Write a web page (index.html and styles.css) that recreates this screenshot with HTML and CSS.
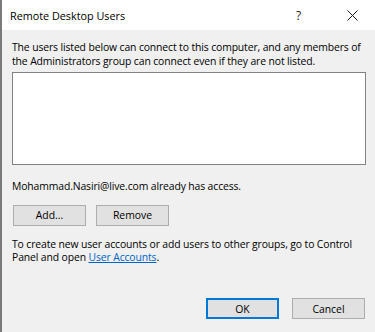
FILE: index.html
```html
<!DOCTYPE html>
<html lang="en">
<head>
  <meta charset="UTF-8">
  <title>Remote Desktop Users</title>
  <link rel="stylesheet" href="styles.css">
</head>
<body>
  <div class="janela">
    <div class="barra-titulo">
      <span class="titulo">Remote Desktop Users</span>
      <span class="ajuda">?</span>
      <span class="fechar">
        <svg width="11" height="11" viewBox="0 0 11 11">
          <path d="M0.5 0.5 L10.5 10.5 M10.5 0.5 L0.5 10.5" stroke="#1a1a1a" stroke-width="1" fill="none"/>
        </svg>
      </span>
    </div>

    <div class="conteudo">
      <p class="texto">The users listed below can connect to this computer, and any members of the Administrators group can connect even if they are not listed.</p>
      <div class="lista"></div>
      <p class="texto acesso">Mohammad.Nasiri@live.com already has access.</p>
      <div class="botoes">
        <button class="botao">Add...</button>
        <button class="botao">Remove</button>
      </div>
      <p class="texto rodape-texto">To create new user accounts or add users to other groups, go to Control Panel and open <a href="#">User Accounts</a>.</p>
    </div>

    <div class="acoes">
      <button class="botao padrao">OK</button>
      <button class="botao">Cancel</button>
    </div>
  </div>
</body>
</html>
```

FILE: styles.css
```css
body {
  margin: 0;
  font-family: "Open Sans", "Noto Sans", sans-serif;
  font-size: 10.4px;
  color: #000;
}
.janela {
  width: 375px;
  height: 332px;
  box-sizing: border-box;
  border-left: 2px solid #7a7a7a;
  background-color: #f0f0f0;
  display: flex;
  flex-direction: column;
}
.barra-titulo {
  height: 30px;
  background-color: #fff;
  display: flex;
  align-items: center;
  padding-left: 8px;
}
.titulo {
  flex: 1;
  font-size: 10.8px;
  color: #000;
}
.ajuda {
  width: 14px;
  margin-right: 37px;
  font-size: 12px;
  color: #1a1a1a;
}
.fechar {
  width: 28px;
  display: flex;
}
.conteudo {
  padding: 11px 1px 0 10px;
}
.texto {
  margin: 0;
  line-height: 13.5px;
  letter-spacing: -0.12px;
}
.lista {
  height: 91px;
  margin: 4px 8px 0 0;
  background-color: #fff;
  border: 1px solid #828282;
}
.acesso {
  margin-top: 15px;
}
.botoes {
  display: flex;
  gap: 10px;
  margin-top: 11px;
  padding-left: 1px;
}
.botao {
  width: 73px;
  height: 21px;
  padding: 0;
  box-sizing: border-box;
  font-family: inherit;
  font-size: 10.4px;
  color: #000;
  background-color: #e1e1e1;
  border: 1px solid #adadad;
}
.botao.padrao {
  border: 2px solid #0078d7;
}
.rodape-texto {
  margin-top: 12px;
  line-height: 13px;
}
.rodape-texto a {
  color: #0066cc;
}
.acoes {
  margin-top: auto;
  display: flex;
  justify-content: flex-end;
  gap: 13px;
  padding: 0 10px 13px 0;
}
```
